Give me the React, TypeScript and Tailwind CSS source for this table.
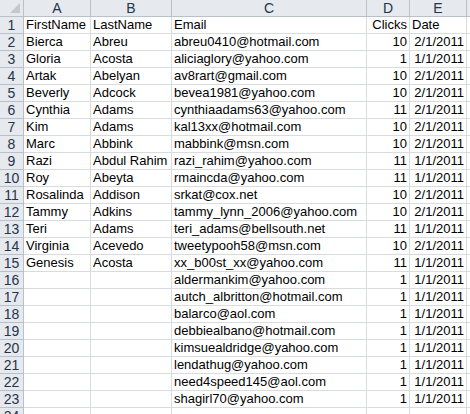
const rows: [string, string, string, number | null, string][] = [
  ['FirstName', 'LastName', 'Email', null, 'Date'],
  ['Bierca', 'Abreu', 'abreu0410@hotmail.com', 10, '2/1/2011'],
  ['Gloria', 'Acosta', 'aliciaglory@yahoo.com', 1, '1/1/2011'],
  ['Artak', 'Abelyan', 'av8rart@gmail.com', 10, '2/1/2011'],
  ['Beverly', 'Adcock', 'bevea1981@yahoo.com', 10, '2/1/2011'],
  ['Cynthia', 'Adams', 'cynthiaadams63@yahoo.com', 11, '2/1/2011'],
  ['Kim', 'Adams', 'kal13xx@hotmail.com', 10, '2/1/2011'],
  ['Marc', 'Abbink', 'mabbink@msn.com', 10, '2/1/2011'],
  ['Razi', 'Abdul Rahim', 'razi_rahim@yahoo.com', 11, '1/1/2011'],
  ['Roy', 'Abeyta', 'rmaincda@yahoo.com', 11, '1/1/2011'],
  ['Rosalinda', 'Addison', 'srkat@cox.net', 10, '2/1/2011'],
  ['Tammy', 'Adkins', 'tammy_lynn_2006@yahoo.com', 10, '2/1/2011'],
  ['Teri', 'Adams', 'teri_adams@bellsouth.net', 11, '1/1/2011'],
  ['Virginia', 'Acevedo', 'tweetypooh58@msn.com', 10, '2/1/2011'],
  ['Genesis', 'Acosta', 'xx_b00st_xx@yahoo.com', 11, '1/1/2011'],
  ['', '', 'aldermankim@yahoo.com', 1, '1/1/2011'],
  ['', '', 'autch_albritton@hotmail.com', 1, '1/1/2011'],
  ['', '', 'balarco@aol.com', 1, '1/1/2011'],
  ['', '', 'debbiealbano@hotmail.com', 1, '1/1/2011'],
  ['', '', 'kimsuealdridge@yahoo.com', 1, '1/1/2011'],
  ['', '', 'lendathug@yahoo.com', 1, '1/1/2011'],
  ['', '', 'need4speed145@aol.com', 1, '1/1/2011'],
  ['', '', 'shagirl70@yahoo.com', 1, '1/1/2011'],
];

const hdr =
  'bg-[#e6e9ee] border-r border-b border-[#b8c0ca] text-[#27344a] text-[14px] flex items-end justify-center leading-[16px]';
const cell =
  'border-r border-b border-[#d9dcdf] bg-white flex items-end leading-[16px] overflow-hidden whitespace-nowrap px-[2px]';

export default function App() {
  return (
    <div className="w-[470px] h-[414px] overflow-hidden bg-white font-['Liberation_Sans',Arial,sans-serif] text-[13px] text-black">
      <div className="grid grid-cols-[24px_67px_81px_195px_43px_57px_1fr] auto-rows-[17px]">
        {/* Column headers */}
        <div className={`${hdr} relative`}>
          <div className="absolute right-[3px] bottom-[3px] w-0 h-0 border-l-[10px] border-l-transparent border-b-[10px] border-b-[#c3c8cf]" />
        </div>
        {['A', 'B', 'C', 'D', 'E', ''].map((c, i) => (
          <div key={i} className={hdr}>
            {c}
          </div>
        ))}

        {/* Data rows */}
        {rows.map((r, i) => (
          <div key={i} className="contents">
            <div className={hdr}>{i + 1}</div>
            <div className={cell}>{r[0]}</div>
            <div className={cell}>{r[1]}</div>
            <div className={cell}>{r[2]}</div>
            <div className={`${cell} justify-end`}>{i === 0 ? 'Clicks' : r[3]}</div>
            <div className={`${cell} ${i === 0 ? '' : 'justify-end'}`}>{r[4]}</div>
            <div className={cell} />
          </div>
        ))}

        {/* Partial row 24 */}
        <div className={hdr}>24</div>
        <div className={cell} />
        <div className={cell} />
        <div className={cell} />
        <div className={cell} />
        <div className={cell} />
        <div className={cell} />
      </div>
    </div>
  );
}
